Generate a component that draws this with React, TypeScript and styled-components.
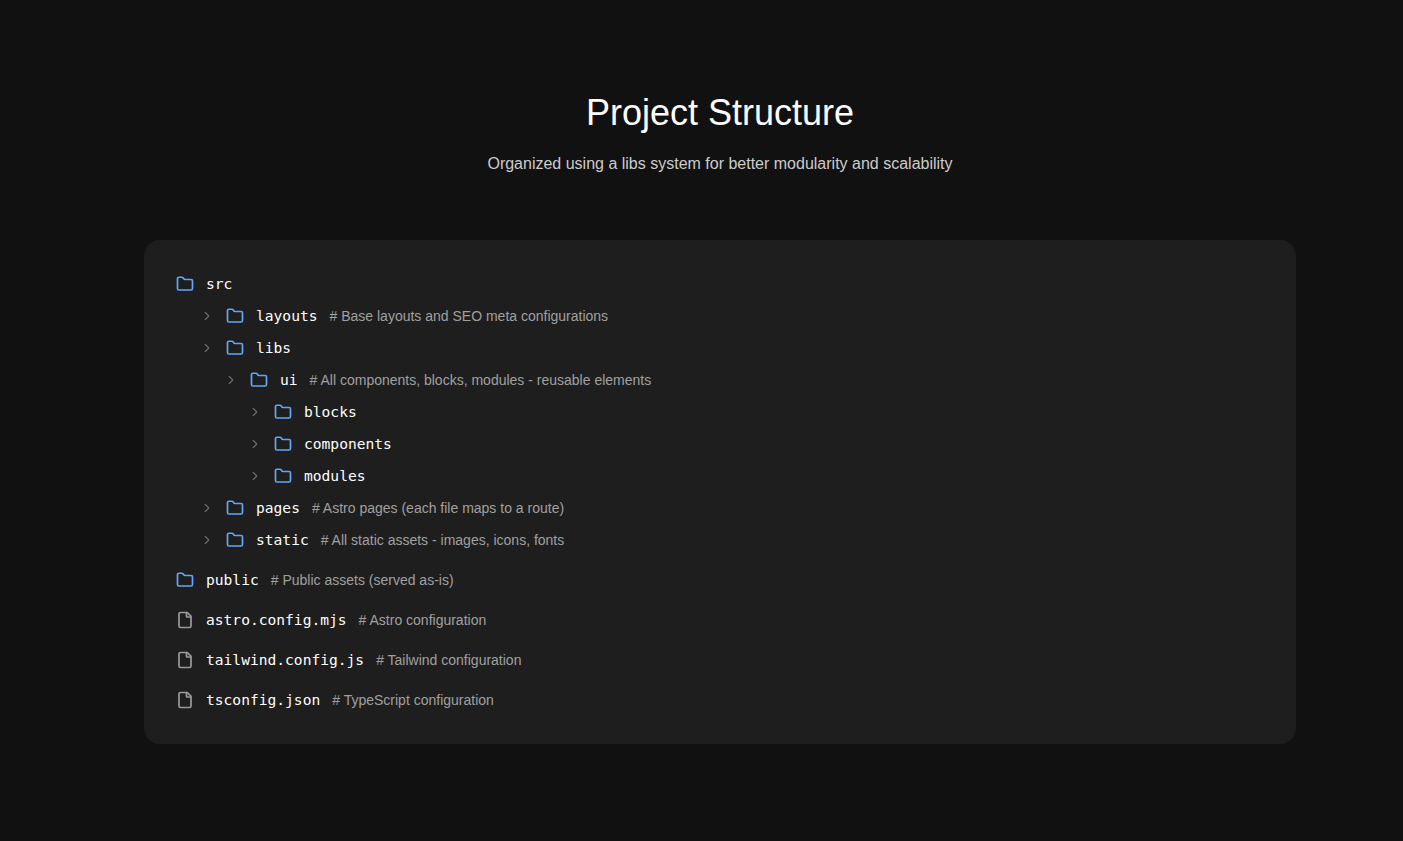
import { ChevronRight, File, Folder } from 'lucide-react'
import styled, { createGlobalStyle } from 'styled-components'

type TreeEntry = {
  name: string
  comment?: string
  children?: TreeEntry[]
}

const ICON_STROKE = 2.3

const LIBS_UI: TreeEntry[] = [{ name: 'blocks' }, { name: 'components' }, { name: 'modules' }]

const SRC_CHILDREN: TreeEntry[] = [
  { name: 'layouts', comment: '# Base layouts and SEO meta configurations' },
  {
    name: 'libs',
    children: [
      {
        name: 'ui',
        comment: '# All components, blocks, modules - reusable elements',
        children: LIBS_UI,
      },
    ],
  },
  { name: 'pages', comment: '# Astro pages (each file maps to a route)' },
  { name: 'static', comment: '# All static assets - images, icons, fonts' },
]

const ROOT_FILES: TreeEntry[] = [
  { name: 'astro.config.mjs', comment: '# Astro configuration' },
  { name: 'tailwind.config.js', comment: '# Tailwind configuration' },
  { name: 'tsconfig.json', comment: '# TypeScript configuration' },
]

const GlobalStyle = createGlobalStyle`
  html, body {
    margin: 0;
    background: #111111;
    overflow-x: hidden;
  }

  body {
    font-family: "Liberation Sans", Arial, sans-serif;
  }
`

const Section = styled.section`
  width: 1440px;
  min-height: 841px;
  box-sizing: border-box;
  padding: 91px 144px 0;
  background: #111111;
`

const Header = styled.header`
  text-align: center;
  margin-bottom: 64px;
`

const Title = styled.h2`
  margin: 0 0 18px;
  font-size: 36px;
  font-weight: 400;
  line-height: 43px;
  color: #ffffff;
`

const Subtitle = styled.p`
  margin: 0;
  font-size: 16px;
  line-height: 24px;
  color: #cccccc;
`

const Card = styled.div`
  display: flex;
  flex-direction: column;
  gap: 16px;
  padding: 32px;
  border-radius: 16px;
  background: #1e1e1e;
`

const Branch = styled.div`
  display: flex;
  flex-direction: column;
  gap: 8px;
`

const Nested = styled(Branch)`
  padding-left: 24px;
`

const Row = styled.div`
  display: flex;
  align-items: center;
  height: 24px;
  gap: 12px;
`

const Chevron = styled(ChevronRight)`
  flex: none;
  color: #666666;
`

const FolderIcon = styled(Folder)`
  flex: none;
  color: #60a5fa;
`

const FileIcon = styled(File)`
  flex: none;
  color: #999999;
`

const Name = styled.span`
  padding-bottom: 2px;
  font-family: "DejaVu Sans Mono", "Liberation Mono", monospace;
  font-size: 14.6px;
  color: #ffffff;
`

const Comment = styled.span`
  font-size: 14px;
  color: #a0a0a0;
`

function FolderRow({ entry }: { entry: TreeEntry }) {
  return (
    <Branch>
      <Row>
        <Chevron size={14} strokeWidth={ICON_STROKE} />
        <FolderIcon size={18} strokeWidth={ICON_STROKE} />
        <Name>{entry.name}</Name>
        {entry.comment && <Comment>{entry.comment}</Comment>}
      </Row>
      {entry.children && (
        <Nested>
          {entry.children.map((child) => (
            <FolderRow key={child.name} entry={child} />
          ))}
        </Nested>
      )}
    </Branch>
  )
}

function App() {
  return (
    <Section>
      <GlobalStyle />
      <Header>
        <Title>Project Structure</Title>
        <Subtitle>Organized using a libs system for better modularity and scalability</Subtitle>
      </Header>
      <Card>
        <Branch>
          <Row>
            <FolderIcon size={18} strokeWidth={ICON_STROKE} />
            <Name>src</Name>
          </Row>
          <Nested>
            {SRC_CHILDREN.map((entry) => (
              <FolderRow key={entry.name} entry={entry} />
            ))}
          </Nested>
        </Branch>
        <Row>
          <FolderIcon size={18} strokeWidth={ICON_STROKE} />
          <Name>public</Name>
          <Comment># Public assets (served as-is)</Comment>
        </Row>
        {ROOT_FILES.map((file) => (
          <Row key={file.name}>
            <FileIcon size={18} strokeWidth={ICON_STROKE} />
            <Name>{file.name}</Name>
            <Comment>{file.comment}</Comment>
          </Row>
        ))}
      </Card>
    </Section>
  )
}

export default App
